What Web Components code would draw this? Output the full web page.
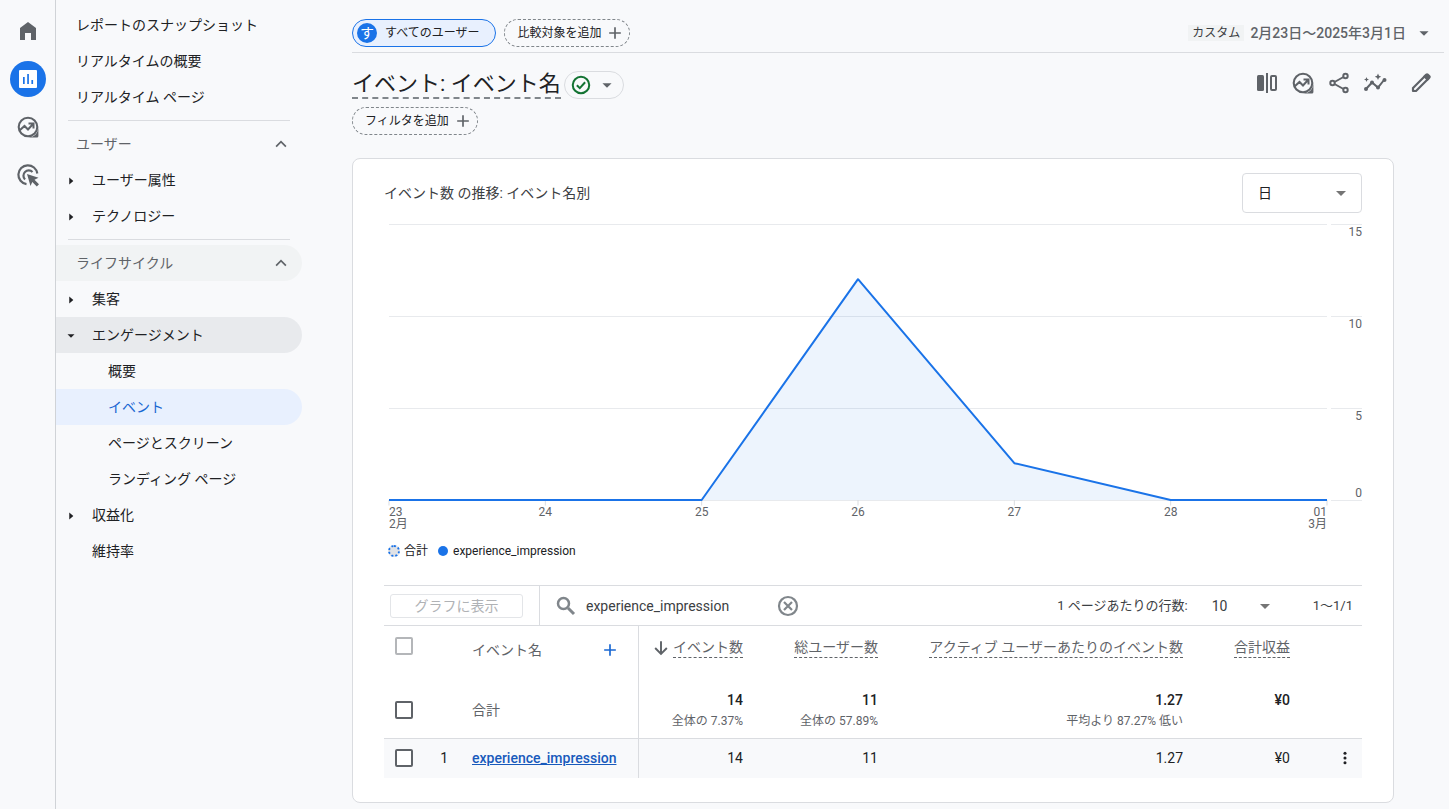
<!DOCTYPE html>
<html lang="ja">
<head>
<meta charset="utf-8">
<meta name="viewport" content="width=device-width, initial-scale=1">
<title>アナリティクス | イベント</title>
<style>
  :root {
    --ink: #202124; --ink-2: #3c4043; --ink-3: #5f6368; --line: #dadce0;
    --blue: #1a73e8; --link: #1967d2; --page: #f8f9fb;
  }
  body {
    margin: 0; background: var(--page); color: var(--ink);
    font: 14px/20px Roboto, "Noto Sans CJK JP", sans-serif;
  }
</style>
</head>
<body>
<report-app></report-app>

<script>
const define = (name, css, html, setup) => {
  const tpl = document.createElement('template');
  tpl.innerHTML = `<style>*{box-sizing:border-box}button,input,select{font:inherit;color:inherit;margin:0}button{cursor:pointer}a{color:inherit;text-decoration:none}${css}</style>${html}`;
  customElements.define(name, class extends HTMLElement {
    connectedCallback() {
      if (this.shadowRoot) return;
      this.attachShadow({ mode: 'open' }).append(tpl.content.cloneNode(true));
      if (setup) setup(this, this.shadowRoot);
    }
  });
};

const ICONS = {
  home: '<path fill="currentColor" d="M4 21V9l8-6 8 6v12h-5v-7H9v7z"/>',
  reports: '<path fill="#fff" d="M4 3h16a1 1 0 0 1 1 1v16a1 1 0 0 1-1 1H4a1 1 0 0 1-1-1V4a1 1 0 0 1 1-1z"/><path fill="#1a73e8" d="M7 10h1.700v7H7zM11.200 7h1.700v10h-1.700zM15.400 13h1.700v4h-1.700z"/>',
  explore: '<circle cx="12" cy="12" r="9.300" fill="none" stroke="currentColor" stroke-width="2.100"/><path fill="currentColor" fill-rule="evenodd" d="M22.400 12v8.900a1.500 1.500 0 0 1-1.500 1.500H12c4-.4 6-1.400 7.600-3S22 15.500 22.400 12z"/><path fill="none" stroke="currentColor" stroke-width="2" d="M3.500 15.500l5-4.500 3.500 3.500 5-5.500M12.500 8.500H17.500V13.500"/>',
  ads: '<g fill="none" stroke="currentColor" stroke-width="2.200"><path d="M10.500 21.200A9.500 9.500 0 1 1 21.300 10.500"/><path d="M9 16.500A5.200 5.200 0 1 1 16.500 9"/></g><path fill="currentColor" d="M11 11l11.500 3.700-4 2.100 4.500 4.500-2.200 2.200-4.500-4.500-1.800 4z"/>',
  up: '<path fill="none" stroke="currentColor" stroke-width="2.300" d="M5.500 15.500l6.500-6.500 6.500 6.500"/>',
  right: '<path fill="currentColor" d="M9 6l7 6-7 6z"/>',
  down: '<path fill="currentColor" d="M6 9h12l-6 6z"/>',
  drop: '<path fill="currentColor" d="M7 10h10l-5 5z"/>',
  plus: '<path fill="none" stroke="currentColor" stroke-width="2" d="M12 5v14M5 12h14"/>',
  check: '<circle cx="12" cy="12" r="9" fill="none" stroke="currentColor" stroke-width="2.200"/><path fill="none" stroke="currentColor" stroke-width="2.200" d="M7.500 12.200l3.200 3.200L16.500 9"/>',
  compare: '<rect x="2" y="4" width="7" height="16" rx="1.500" fill="currentColor"/><path fill="currentColor" d="M11 2h2v20h-2z"/><rect x="16" y="5" width="5" height="14" rx="1" fill="none" stroke="currentColor" stroke-width="2"/>',
  share: '<g fill="none" stroke="currentColor" stroke-width="2"><circle cx="18.500" cy="5" r="2.200"/><circle cx="18.500" cy="19" r="2.200"/><circle cx="5.500" cy="12" r="2.200"/><path d="M7.500 11l9-5M7.500 13l9 5"/></g>',
  insights: '<path fill="none" stroke="currentColor" stroke-width="2" d="M3 18l6-6.500 6 5 6-7.500"/><g fill="currentColor"><circle cx="3" cy="18" r="2"/><circle cx="9" cy="11.500" r="2"/><circle cx="15" cy="16.500" r="2"/><circle cx="21.500" cy="9" r="2"/><path d="M15 2.500l1 2.200 2.200 1-2.200 1L15 9l-1-2.300-2.200-1 2.200-1zM3.500 6l.7 1.800 1.800.7-1.800.7-.7 1.800-.7-1.800L1 8.500l1.800-.7z"/></g>',
  edit: '<path fill="none" stroke="currentColor" stroke-width="2.200" stroke-linejoin="round" d="M4 20v-3L16.500 4.500l3 3L7 20z"/><path fill="currentColor" d="M14 5.500l2.700-2.700c.8-.8 1.900-.8 2.700 0l1.800 1.800c.8.8.8 1.900 0 2.700L18.500 10z"/>',
  search: '<circle cx="9.500" cy="9.500" r="5.500" fill="none" stroke="currentColor" stroke-width="2.500"/><path stroke="currentColor" stroke-width="3" d="M14 14l6 6"/>',
  clear: '<circle cx="12" cy="12" r="9" fill="none" stroke="currentColor" stroke-width="2.200"/><path stroke="currentColor" stroke-width="2.200" d="M8 8l8 8M16 8l-8 8"/>',
  arrow: '<path fill="none" stroke="currentColor" stroke-width="2.300" d="M12 4v15M5 12l7 7 7-7"/>',
  more: '<g fill="currentColor"><circle cx="12" cy="5" r="2.300"/><circle cx="12" cy="12" r="2.300"/><circle cx="12" cy="19" r="2.300"/></g>'
};

define('ui-icon', `:host{display:inline-flex;flex:none;width:24px;height:24px}svg{width:100%;height:100%}`, '',
  (el, root) => {
    root.innerHTML += `<svg viewBox="0 0 24 24" aria-hidden="true">${ICONS[el.getAttribute('name')]}</svg>`;
  });

define('side-rail', `
  :host{display:block;flex:none;width:56px;border-right:1px solid #d0d3d7;color:var(--ink-3)}
  nav{display:flex;flex-direction:column;align-items:center;gap:12px;padding-top:13px}
  a{display:flex;align-items:center;justify-content:center;width:36px;height:36px;border-radius:50%}
  a[aria-current]{background:var(--blue)}`, `
  <nav aria-label="メイン">
    <a href="#home" aria-label="ホーム"><ui-icon name="home"></ui-icon></a>
    <a href="#reports" aria-label="レポート" aria-current="page"><ui-icon name="reports"></ui-icon></a>
    <a href="#explore" aria-label="探索"><ui-icon name="explore"></ui-icon></a>
    <a href="#ads" aria-label="広告"><ui-icon name="ads"></ui-icon></a>
  </nav>`);

define('nav-item', `
  :host{display:block}
  a{display:flex;align-items:center;height:36px;padding-left:20px;border-radius:0 18px 18px 0}
  ui-icon{display:none;width:14px;height:14px;margin:0 14px 0 -12px}
  :host([level="1"]) a{padding-left:36px}
  :host([level="2"]) a{padding-left:52px}
  :host([arrow]) a{padding-left:20px}
  :host([arrow]:not([open])) .closed,:host([open]) .opened{display:block}
  :host([open]) a{background:#e8eaed}
  :host([selected]) a{background:#e8f0fe;color:var(--link)}`,
  `<a href="#report"><ui-icon class="closed" name="right"></ui-icon><ui-icon class="opened" name="down"></ui-icon><slot></slot></a>`);

define('nav-section', `
  :host{display:block}
  hr{height:1px;margin:5px 12px;border:0;background:var(--line)}
  button{display:flex;align-items:center;justify-content:space-between;width:100%;height:36px;padding:0 12px 0 20px;border:0;border-radius:0 18px 18px 0;background:none;color:var(--ink-3)}
  ui-icon{width:18px;height:18px}
  :host([hover]) button{background:#f1f3f4}`, `
  <hr><button aria-expanded="true"><span></span><ui-icon name="up"></ui-icon></button><slot></slot>`,
  (el, root) => { root.querySelector('span').textContent = el.getAttribute('heading'); });

define('report-nav', `:host{display:block;flex:none;width:246px;padding-top:7px}`, `
  <nav aria-label="レポート">
    <nav-item>レポートのスナップショット</nav-item>
    <nav-item>リアルタイムの概要</nav-item>
    <nav-item>リアルタイム ページ</nav-item>
    <nav-section heading="ユーザー">
      <nav-item arrow>ユーザー属性</nav-item>
      <nav-item arrow>テクノロジー</nav-item>
    </nav-section>
    <nav-section heading="ライフサイクル" hover>
      <nav-item arrow>集客</nav-item>
      <nav-item arrow open>エンゲージメント</nav-item>
      <nav-item level="2">概要</nav-item>
      <nav-item level="2" selected>イベント</nav-item>
      <nav-item level="2">ページとスクリーン</nav-item>
      <nav-item level="2">ランディング ページ</nav-item>
      <nav-item arrow>収益化</nav-item>
      <nav-item level="1">維持率</nav-item>
    </nav-section>
  </nav>`);

define('ui-chip', `
  :host{display:inline-flex}
  button{display:flex;align-items:center;gap:4px;height:28px;padding:0 4px 0 12px;border:1px dashed #80868b;border-radius:14px;background:none;font-size:12px;line-height:16px;white-space:nowrap}
  ui-icon{width:20px;height:20px;color:var(--ink-3)}
  b{display:none;width:20px;height:20px;border-radius:50%;background:var(--blue);color:#fff;font-weight:400;font-size:14px;line-height:20px;text-align:center}
  :host([selected]) button{gap:8px;padding:0 16px 0 4px;border:1px solid var(--blue);background:#e8f0fe}
  :host([selected]) ui-icon{display:none}
  :host([selected]) b{display:block}`,
  `<button><b aria-hidden="true">す</b><slot></slot><ui-icon name="plus"></ui-icon></button>`);

define('report-header', `
  :host{display:block}
  .top{display:flex;align-items:center;gap:8px;height:53px;padding-top:14px;margin-right:5px;border-bottom:1px solid var(--line)}
  .date{display:flex;align-items:center;margin:0 9px 0 auto;padding:0;border:0;background:none;color:var(--ink-3);font-weight:500}
  .date small{margin-right:6px;padding:0 4px;background:#f1f3f4;color:var(--ink-2);font-size:12px;font-weight:400;line-height:16px}
  .date ui-icon{width:22px;height:22px;margin-left:7px}
  .title{display:flex;align-items:center;gap:3px;padding:18px 16px 8px 0}
  h1{margin:0;border-bottom:2px dashed #80868b;font-size:22px;font-weight:400;line-height:26px}
  .status{display:flex;align-items:center;gap:4px;width:60px;height:28px;padding:0 0 0 5px;border:1px solid var(--line);border-radius:14px;background:none;color:var(--ink-3)}
  .status ui-icon{width:22px;height:22px}
  .status ui-icon:first-child{color:#137333}
  .tools{display:flex;align-self:flex-start;gap:12px;margin-left:auto;color:var(--ink-3)}
  .tools button{display:flex;padding:0;border:0;background:none}
  .tools button:last-child{margin-left:10px}`, `
  <div class="top">
    <ui-chip selected>すべてのユーザー</ui-chip>
    <ui-chip>比較対象を追加</ui-chip>
    <button class="date"><small>カスタム</small><span>2月23日〜2025年3月1日</span><ui-icon name="drop"></ui-icon></button>
  </div>
  <div class="title">
    <h1>イベント: イベント名</h1>
    <button class="status" aria-label="データ品質"><ui-icon name="check"></ui-icon><ui-icon name="drop"></ui-icon></button>
    <div class="tools">
      <button aria-label="比較"><ui-icon name="compare"></ui-icon></button>
      <button aria-label="探索"><ui-icon name="explore"></ui-icon></button>
      <button aria-label="共有"><ui-icon name="share"></ui-icon></button>
      <button aria-label="インサイト"><ui-icon name="insights"></ui-icon></button>
      <button aria-label="編集"><ui-icon name="edit"></ui-icon></button>
    </div>
  </div>
  <ui-chip>フィルタを追加</ui-chip>`);

define('ui-select', `
  :host{display:grid;align-items:center}
  select,ui-icon{grid-area:1/1}
  select{appearance:none;width:100%;height:100%;border:0;background:none;padding:0 0 0 15px}
  ui-icon{justify-self:end;margin-right:8px;color:#757575;pointer-events:none}
  :host([outlined]){width:120px;height:40px;border:1px solid var(--line);border-radius:4px;background:#fff}`,
  `<select></select><ui-icon name="drop"></ui-icon>`,
  (el, root) => {
    const s = root.querySelector('select');
    s.setAttribute('aria-label', el.getAttribute('label'));
    s.add(new Option(el.getAttribute('value')));
  });

define('trend-chart', `
  :host{display:block}
  header{display:flex;align-items:center;justify-content:space-between}
  h2{margin:0;color:var(--ink-2);font-size:14px;font-weight:400}
  .chart{display:grid;grid-template-columns:1fr 31px;column-gap:4px;margin:11px 0 0 5px;color:var(--ink-3);font-size:12px;line-height:14px}
  .lines{grid-area:1/1}
  .lines,.axis{display:grid;grid-template-rows:repeat(3,92px) 1px}
  .lines i,.axis>*{border-top:1px solid #e8eaed}
  .axis{text-align:right}
  .end{display:flex;flex-direction:column;justify-content:space-between}
  svg{grid-area:1/1;width:100%;height:276px;overflow:visible}
  .area{fill:#1a73e8;fill-opacity:.08}
  .line{fill:none;stroke:var(--blue);stroke-width:2;stroke-linejoin:round;vector-effect:non-scaling-stroke}
  .tick{stroke:#dadce0;stroke-width:1;vector-effect:non-scaling-stroke}
  .days{display:grid;grid-template-columns:1fr repeat(5,2fr) 1fr;margin-top:5px;line-height:12px;text-align:center}
  .days :first-child{text-align:left}
  .days :last-child{text-align:right}
  .legend{display:flex;align-items:center;gap:4px;margin:13px 0 0 4px;font-size:12px;line-height:16px}
  .dot{width:10px;height:10px;border-radius:50%;background:var(--blue);margin:0 1px 0 6px}
  .ring{width:12px;height:12px;border:2px dotted var(--blue);border-radius:50%;background:#e0e2e6}`, `
  <header><h2>イベント数 の推移: イベント名別</h2><ui-select outlined label="粒度" value="日"></ui-select></header>
  <div class="chart">
    <div class="lines"><i></i><i></i><i></i><i></i></div>
    <svg viewBox="0 0 6 15" preserveAspectRatio="none" role="img" aria-label="experience_impression の推移">
      <path class="tick" d="M0 15v.3M1 15v.3M2 15v.3M3 15v.3M4 15v.3M5 15v.3M6 15v.3"/>
      <path class="area" d="M0 15H2L3 3L4 13L5 15z"/>
      <path class="line" d="M0 15H2L3 3L4 13L5 15H6"/>
    </svg>
    <div class="axis"><span>15</span><span>10</span><div class="end"><span>5</span><span>0</span></div><i></i></div>
    <div class="days"><div>23<br>2月</div><div>24</div><div>25</div><div>26</div><div>27</div><div>28</div><div>01<br>3月</div></div>
  </div>
  <div class="legend"><span class="ring"></span>合計<span class="dot"></span>experience_impression</div>`);

define('event-table', `
  :host{display:block;margin-top:26px}
  .bar{display:flex;align-items:center;height:41px;border:solid var(--line);border-width:1px 0;color:var(--ink-2)}
  .plot{width:133px;height:24px;margin:0 16px 0 6px;padding:0;border:1px solid #e3e5e8;border-radius:3px;background:none;color:#b0b2b5;line-height:20px}
  .search{display:flex;align-items:center;align-self:stretch;padding-left:14px;border-left:1px solid var(--line);color:#80868b}
  .search input{width:190px;margin-left:8px;padding:0;border:0;outline:0;background:none;color:var(--ink-2)}
  .search button{display:flex;padding:0;border:0;background:none}
  .page{display:flex;align-items:center;margin-left:auto;font-size:13px}
  .page ui-select{width:88px;margin:0 28px 0 9px;font-size:14px}
  .page span:last-child{padding-right:9px}
  table{width:100%;border-collapse:collapse;table-layout:fixed}
  th,td{padding:0 16px 0 0;text-align:right;font-weight:400;vertical-align:middle}
  thead th,.total th{height:56px;color:var(--ink-3)}
  thead th{vertical-align:top;padding-top:11px}
  tbody tr:last-child :is(td,th){height:40px;background:var(--page)}
  .total :is(td,th){border-bottom:1px solid var(--line);height:56px}
  tr>:nth-child(1){padding:0 0 0 11px;text-align:left}
  thead tr>:nth-child(1){padding-top:11px}
  tr>:nth-child(2){padding-right:8px}
  tr>:nth-child(3){padding-left:16px;text-align:left;border-right:1px solid var(--line)}
  input[type=checkbox]{appearance:none;display:block;width:18px;height:18px;border:2px solid var(--ink-3);border-radius:2px;background:#fff}
  thead input[type=checkbox]{border-color:#b4b6b9}
  .name{display:flex;align-items:center;justify-content:space-between;margin-top:3px}
  .name button,.more{display:flex;padding:0;border:0;background:none;color:var(--link)}
  .name ui-icon{width:20px;height:20px;margin-right:2px}
  .m{display:inline-block;border-bottom:1px dashed var(--ink-3);line-height:20px}
  .sort{width:20px;height:20px;margin:-4px 2px 0 0;vertical-align:-6px}
  .total b{display:block;font-weight:500;line-height:22px;color:var(--ink)}
  .total small{display:block;color:var(--ink-3);font-size:12px;line-height:20px}
  td a{color:#185abc;font-weight:500;text-decoration:underline}
  .more{margin-left:auto;color:var(--ink)}
  .more ui-icon{width:16px;height:16px}
  tr>:nth-child(8){padding-right:9px}`, `
  <div class="bar">
    <button class="plot" disabled>グラフに表示</button>
    <div class="search"><ui-icon name="search"></ui-icon><input type="text" aria-label="検索" value="experience_impression"><button aria-label="クリア"><ui-icon name="clear"></ui-icon></button></div>
    <div class="page"><span>1 ページあたりの行数:</span><ui-select label="1 ページあたりの行数" value="10"></ui-select><span>1〜1/1</span></div>
  </div>
  <table>
    <colgroup><col style="width:40px"><col style="width:32px"><col style="width:182px"><col style="width:121px"><col style="width:135px"><col><col style="width:107px"><col style="width:56px"></colgroup>
    <thead><tr>
      <th><input type="checkbox" aria-label="すべて選択" disabled></th><th></th>
      <th><div class="name">イベント名<button aria-label="ディメンションを追加"><ui-icon name="plus"></ui-icon></button></div></th>
      <th><ui-icon class="sort" name="arrow"></ui-icon><span class="m">イベント数</span></th>
      <th><span class="m">総ユーザー数</span></th>
      <th><span class="m">アクティブ ユーザーあたりのイベント数</span></th>
      <th><span class="m">合計収益</span></th><th></th>
    </tr></thead>
    <tbody>
      <tr class="total">
        <td><input type="checkbox" aria-label="合計を選択"></td><td></td><th scope="row">合計</th>
        <td><b>14</b><small>全体の 7.37%</small></td>
        <td><b>11</b><small>全体の 57.89%</small></td>
        <td><b>1.27</b><small>平均より 87.27% 低い</small></td>
        <td><b>¥0</b><small>&nbsp;</small></td><td></td>
      </tr>
      <tr>
        <td><input type="checkbox" aria-label="experience_impression を選択"></td><td>1</td>
        <td><a href="#event">experience_impression</a></td>
        <td>14</td><td>11</td><td>1.27</td><td>¥0</td>
        <td><button class="more" aria-label="その他"><ui-icon name="more"></ui-icon></button></td>
      </tr>
    </tbody>
  </table>`);

define('report-card', `
  :host{display:block;margin:23px 55px 5px 0;padding:14px 31px 24px;border:1px solid var(--line);border-radius:8px;background:#fff}`,
  `<slot></slot>`);

define('report-app', `
  :host{display:flex;min-height:100vh}
  main{flex:1;min-width:0;padding-left:50px}`, `
  <side-rail></side-rail>
  <report-nav></report-nav>
  <main>
    <report-header></report-header>
    <report-card><trend-chart></trend-chart><event-table></event-table></report-card>
  </main>`);
</script>
</body>
</html>
